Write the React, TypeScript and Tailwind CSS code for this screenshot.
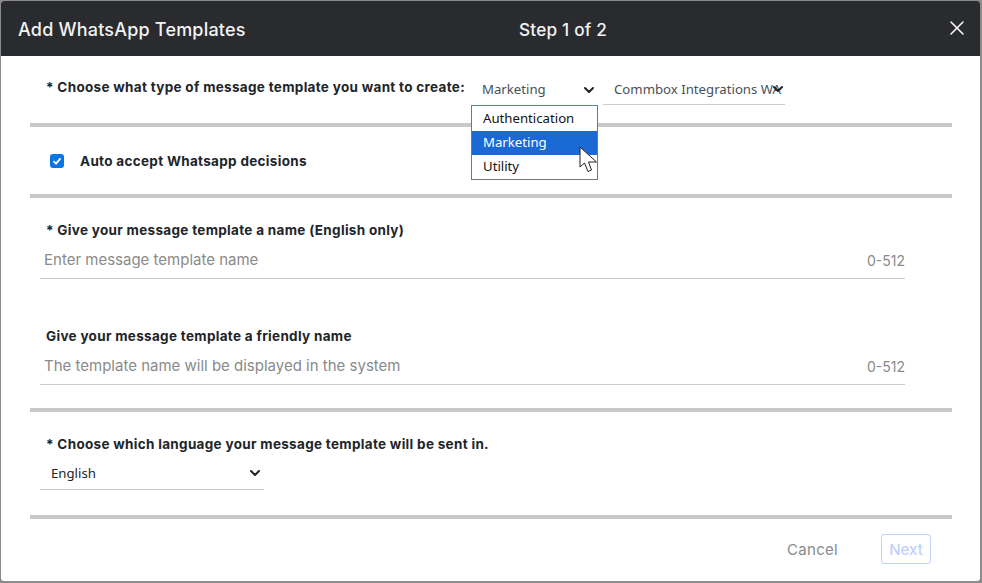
import { ChevronDown, X } from "lucide-react";

const labelClass = "font-['Inter',sans-serif] text-[13.5px] font-bold text-[#212529] tracking-[0.31px]";
const selectText = "font-['Noto_Sans',sans-serif] text-[13.2px]";

function Divider() {
  return <div className="h-1 bg-[#c8c8c8] shrink-0" />;
}

function FakeSelect({ value, className }: { value: string; className: string }) {
  return (
    <div className={`flex items-center border-b border-[#cccccc] ${selectText} ${className}`}>
      <span className="whitespace-nowrap">{value}</span>
    </div>
  );
}

function TextField({ placeholder }: { placeholder: string }) {
  return (
    <div className="flex items-center justify-between h-[37px] w-[865px] ml-[10px] pl-1 pt-[1px] border-b border-[#cccccc] font-['Inter',sans-serif] text-[15px] text-[#8a8a8a]">
      <span>{placeholder}</span>
      <span className="text-[14px]">0-512</span>
    </div>
  );
}

function Dropdown() {
  const options = ["Authentication", "Marketing", "Utility"];
  return (
    <div className="absolute left-[-1px] top-[32px] w-[127px] h-[75px] pt-px bg-white border border-[#767676] border-t-[#5a7fc0] z-10">
      {options.map((o) => (
        <div
          key={o}
          className={`h-6 flex items-center pl-[11px] ${selectText} ${o === "Marketing" ? "bg-[#1a69d4] text-white" : "text-[#111111]"}`}
        >
          {o}
        </div>
      ))}
      {/* mouse pointer */}
      <svg className="absolute left-[107px] top-[40px]" width="20" height="27" viewBox="0 0 20 27">
        <path
          d="M1 1 L1 21 L5.5 17 L9 25.5 L12.5 24 L9.5 16 L17.5 16 Z"
          fill="#ffffff"
          stroke="#222222"
          strokeWidth="1"
          strokeLinejoin="round"
        />
      </svg>
    </div>
  );
}

export default function App() {
  return (
    <div className="w-[982px] h-[583px] bg-[#8b8b8b] pl-px pt-px pr-[2px] pb-[2px] overflow-hidden">
      <div className="h-[580px] bg-white rounded-[3px] flex flex-col overflow-hidden">
        <div className="h-[55px] shrink-0 bg-[#2a2b2f] text-[#f2f2f2] flex items-center relative pl-[17px] pr-[11px] pt-[2px] font-['Inter',sans-serif] text-[18px] tracking-[0.2px] font-medium">
          <span>Add WhatsApp Templates</span>
          <span className="absolute left-[518px] text-[17.2px]">Step 1 of 2</span>
          <button className="ml-auto text-white -mt-[3px]">
            <X size={24} strokeWidth={1.5} />
          </button>
        </div>

        <div className="flex flex-col pl-[29px] pr-[28px]">
          <div className="h-[67px] flex pt-[17px]">
            <div className={`${labelClass} ml-[16px] w-[426px] leading-[28px]`}>* Choose what type of message template you want to create:</div>
            <div className="relative w-[126px] h-[32px] mr-[5px]">
              <div className={`flex items-center justify-between h-[32px] pl-[10px] pr-[1px] pt-[2px] text-[#495057] ${selectText}`}>
                <span>Marketing</span>
                <ChevronDown size={16} strokeWidth={3} className="text-[#222222]" />
              </div>
              <Dropdown />
            </div>
            <div className="relative w-[182px]">
              <FakeSelect value="Commbox Integrations WA" className="h-[32px] pl-[11px] pt-[2px] text-[#495057]" />
              <ChevronDown size={16} strokeWidth={3} className="absolute right-[-0.5px] top-[8px] text-[#222222]" />
            </div>
          </div>
          <Divider />

          <div className="h-[67px] flex items-center pl-[20px] pt-[1px]">
            <span className="w-[14px] h-[14px] rounded-[3px] bg-[#0a75e3] flex items-center justify-center">
              <svg width="10" height="10" viewBox="0 0 10 10">
                <path d="M1.5 5.2 L4 7.6 L8.5 2.4" fill="none" stroke="#ffffff" strokeWidth="1.8" />
              </svg>
            </span>
            <span className={`${labelClass} ml-[16px]`}>Auto accept Whatsapp decisions</span>
          </div>
          <Divider />

          <div className="h-[210px] flex flex-col">
            <div className={`${labelClass} ml-[16px] mt-[22px] leading-[20px]`}>* Give your message template a name (English only)</div>
            <div className="mt-[2px]">
              <TextField placeholder="Enter message template name" />
            </div>
            <div className={`${labelClass} ml-[16px] mt-[47px] leading-[20px]`}>Give your message template a friendly name</div>
            <div className="mt-[2px]">
              <TextField placeholder="The template name will be displayed in the system" />
            </div>
          </div>
          <Divider />

          <div className="h-[103px] flex flex-col">
            <div className={`${labelClass} ml-[16px] mt-[22px] leading-[20px]`}>* Choose which language your message template will be sent in.</div>
            <div className="relative ml-[10px] mt-[1px] w-[224px]">
              <FakeSelect value="English" className="h-[35px] pl-[11px] pt-[3px] text-[#212529]" />
              <ChevronDown size={16} strokeWidth={3} className="absolute right-[1px] top-[10px] text-[#222222]" />
            </div>
          </div>
          <Divider />

          <div className="flex items-center justify-end h-[62px] pr-[21px] pb-[3px] font-['Inter',sans-serif] text-[15px]">
            <button className="text-[#8a8a8a] mr-[43px] tracking-[0.3px] mt-[3px]">Cancel</button>
            <button className="w-[50px] h-[30px] pt-[3px] border border-[#bfd0fb] rounded-[3px] text-[#bfd0fb] font-medium">Next</button>
          </div>
        </div>
      </div>
    </div>
  );
}
